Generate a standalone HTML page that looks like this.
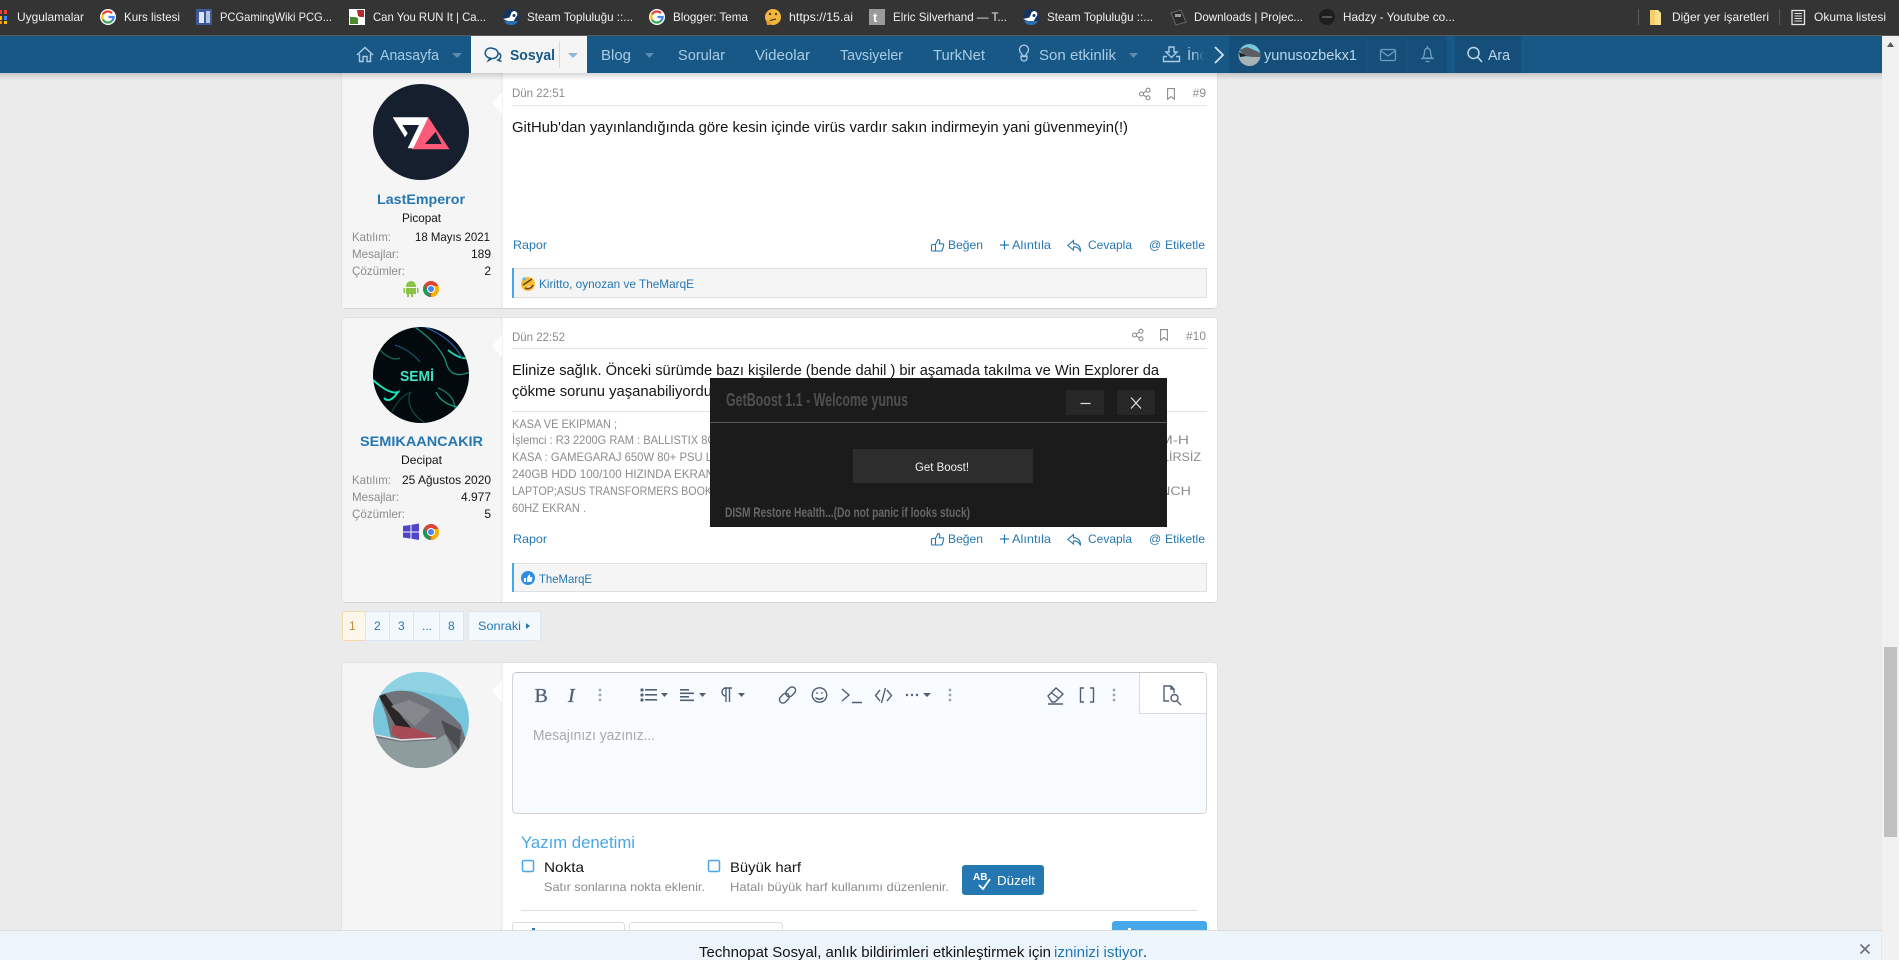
<!DOCTYPE html>
<html lang="tr">
<head>
<meta charset="utf-8">
<title>Technopat Sosyal</title>
<style>
html,body{margin:0;padding:0;background:#ebebeb;overflow:hidden;width:1899px;height:960px}
svg{display:block;font-family:"Liberation Sans",Arial,sans-serif}
.bm{font-size:12px;fill:#f0f0f0}
.nv{font-size:15px;fill:#a9cce6}
.lb{font-size:12px;fill:#8c8c8c}
.vl{font-size:12px;fill:#141414}
.lk{font-size:12px;fill:#2577b1}
.sg{font-size:12px;fill:#8c8c8c}
.ps{font-size:14.5px;fill:#141414}
.ln{fill:none;stroke:#505f75;stroke-width:1.4}
.ac{fill:none;stroke:#2577b1;stroke-width:1.1}
.hd{fill:none;stroke:#8c8c8c;stroke-width:1.1}
</style>
</head>
<body>
<svg width="1899" height="960" viewBox="0 0 1899 960" xmlns="http://www.w3.org/2000/svg">
<defs>
<linearGradient id="shadow" x1="0" y1="0" x2="0" y2="1"><stop offset="0" stop-color="#000" stop-opacity=".16"/><stop offset="1" stop-color="#000" stop-opacity="0"/></linearGradient>
<linearGradient id="fade" x1="0" y1="0" x2="1" y2="0"><stop offset="0" stop-color="#185886" stop-opacity="0"/><stop offset="1" stop-color="#185886"/></linearGradient>
<clipPath id="c1"><circle cx="421" cy="375" r="48"/></clipPath>
<clipPath id="c2"><circle cx="421" cy="720" r="48"/></clipPath>
<clipPath id="c4"><circle cx="1249.5" cy="55" r="11"/></clipPath>
<clipPath id="c3"><rect x="1180" y="40" width="24" height="30"/></clipPath>
<g id="goog"><circle cx="0" cy="0" r="8" fill="#fff"/><path d="M-5 -2.6A5.6 5.6 0 0 1 4 -3.8" fill="none" stroke="#ea4335" stroke-width="2.2"/><path d="M-5 -2.6A5.6 5.6 0 0 0 -5 2.6" fill="none" stroke="#fbbc05" stroke-width="2.2"/><path d="M-5 2.6A5.6 5.6 0 0 0 4 3.8" fill="none" stroke="#34a853" stroke-width="2.2"/><path d="M4 3.8A5.6 5.6 0 0 0 5.6 0H0.5" fill="none" stroke="#4285f4" stroke-width="2.2"/></g>
<g id="steam"><circle r="8" fill="#14355f"/><path d="M-8 2L-2 4.5A3 3 0 0 0 3 3.5L5 0A3.2 3.2 0 1 0 0 -3L-1.5 0.5Z" fill="#fff"/><circle cx="3" cy="-1.5" r="1.5" fill="#14355f"/><path d="M-7 4A8 8 0 0 0 7 4" fill="#2b6fb3"/></g>
<g id="chrome"><circle r="8" fill="#db4437"/><path d="M-6.9 -4L0 8A8 8 0 0 1 -6.9 -4Z" fill="#0f9d58"/><path d="M0 8A8 8 0 0 0 7.5 -3L1 -3Z" fill="#f4b400"/><circle r="4" fill="#fff"/><circle r="3" fill="#4285f4"/></g>
<g id="dolphin">
<rect x="-48" y="-48" width="96" height="96" fill="#78c6dc"/>
<path d="M-48 -48H48V-20L-10 -30L-42 -26L-48 -20Z" fill="#8fd2e4"/>
<path d="M-42 -24Q-25 -32 -8 -28Q20 -18 40 5L48 30V48H-48V15L-30 18L-35 -5Z" fill="#70747a"/>
<path d="M-42 -24L-36 -26L-18 -2L-8 10L-22 12L-32 -6Z" fill="#2a2628"/>
<path d="M-30 -14L-12 -20L10 -10L-6 6Z" fill="#85898d"/>
<path d="M-28 5L-8 8L15 17L-18 20L-30 14Z" fill="#a84a55"/>
<path d="M-48 17L-20 22L15 20L25 14L38 48H-48Z" fill="#8e9c9e"/>
<path d="M-45 15L-20 20L15 18" fill="none" stroke="#e0e0e0" stroke-width="1.5"/>
<path d="M20 0L40 10L38 30L25 15Z" fill="#4b4d50"/>
</g>
<g id="thumb"><path class="ac" d="M2 6.5H4.5V13H1.5Q.5 13 .5 12V7.5Q.5 6.5 2 6.5ZM4.5 6.5L7 1.5Q8.8 1.5 8.8 3.5L8.2 5.8H11.8Q13 6 12.6 7.5L11.4 12Q11 13 10 13H4.5"/></g>
<g id="reply"><path class="ac" d="M6.5 1.5L.8 6.5L6.5 11V8Q11.5 7.5 13.5 12.5Q13.7 5.2 6.5 4.6Z"/></g>
<g id="share"><circle cx="2.5" cy="6" r="2" class="hd"/><circle cx="9" cy="2.2" r="2" class="hd"/><circle cx="9" cy="9.8" r="2" class="hd"/><path class="hd" d="M4.3 5L7.2 3.2M4.3 7L7.2 8.8"/></g>
<g id="mark"><path class="hd" d="M.6 .6H7.4V11.2L4 8.6L.6 11.2Z"/></g>
</defs>

<!-- page -->
<rect width="1899" height="960" fill="#ebebeb"/>

<!-- post 9 -->
<rect x="341.5" y="40.5" width="876" height="268" rx="4" fill="#fff" stroke="#e2e2e2"/>
<path d="M342 44H502V308H345Q342 308 342 305Z" fill="#f5f5f5"/>
<path d="M502 40V308" stroke="#e4e4e4"/>
<path d="M345 308.5H1214" stroke="#d2d2d2"/>
<path d="M502 92L492 103L502 114Z" fill="#fff"/>
<circle cx="421" cy="132" r="48" fill="#151f2e"/>
<path d="M428.300 117.300L449.500 149.300H411.700ZM435.700 131.700L425 144H441.700Z" fill="#fb5a78" fill-rule="evenodd"/>
<path d="M392.700 117.300H428.300L413.300 148.300H407.700L419 125H402.300L407.700 133.300L405 137.300Z" fill="#fff"/>
<text x="377" y="204" font-size="14" font-weight="bold" fill="#2577b1" textLength="88" lengthAdjust="spacingAndGlyphs">LastEmperor</text>
<text x="402" y="222" class="vl" textLength="39" lengthAdjust="spacingAndGlyphs">Picopat</text>
<text x="352" y="241" class="lb" textLength="39" lengthAdjust="spacingAndGlyphs">Katılım:</text>
<text x="415" y="241" class="vl" textLength="75" lengthAdjust="spacingAndGlyphs">18 Mayıs 2021</text>
<text x="352" y="258" class="lb" textLength="47" lengthAdjust="spacingAndGlyphs">Mesajlar:</text>
<text x="491" y="258" class="vl" text-anchor="end">189</text>
<text x="352" y="275" class="lb" textLength="53" lengthAdjust="spacingAndGlyphs">Çözümler:</text>
<text x="491" y="275" class="vl" text-anchor="end">2</text>
<path d="M406 286A5 5 0 0 1 416 286V287H406ZM406 288H416V294H413V297H411V294H409V297H407V294H406ZM403.500 288H405V293H403.500ZM417 288H418.500V293H417Z" fill="#8bc34a"/>
<use href="#chrome" x="431" y="289"/>

<text x="512" y="97" class="lb" textLength="53" lengthAdjust="spacingAndGlyphs">Dün 22:51</text>
<use href="#share" x="1139" y="88"/>
<use href="#mark" x="1167" y="88"/>
<text x="1206" y="97" class="lb" text-anchor="end">#9</text>
<path d="M512 105.500H1207" stroke="#e4e4e4"/>
<text x="512" y="132" class="ps" textLength="616" lengthAdjust="spacingAndGlyphs">GitHub'dan yayınlandığında göre kesin içinde virüs vardır sakın indirmeyin yani güvenmeyin(!)</text>
<text x="513" y="249" class="lk" textLength="34" lengthAdjust="spacingAndGlyphs">Rapor</text>
<use href="#thumb" x="931" y="238"/>
<text x="948" y="249" class="lk" textLength="35" lengthAdjust="spacingAndGlyphs">Beğen</text>
<path d="M1000 245H1009M1004.500 240.500V249.500" stroke="#2577b1" stroke-width="1.200"/>
<text x="1012" y="249" class="lk" textLength="39" lengthAdjust="spacingAndGlyphs">Alıntıla</text>
<use href="#reply" x="1067" y="239"/>
<text x="1088" y="249" class="lk" textLength="44" lengthAdjust="spacingAndGlyphs">Cevapla</text>
<text x="1149" y="249" class="lk" font-size="13">@</text>
<text x="1165" y="249" class="lk" textLength="40" lengthAdjust="spacingAndGlyphs">Etiketle</text>
<rect x="512.500" y="268.500" width="694" height="29" fill="#f5f5f5" stroke="#dfdfdf"/>
<rect x="512" y="268" width="2" height="30" fill="#47a7eb"/>
<circle cx="528" cy="284" r="7" fill="#f7bf2d"/>
<path d="M523 285L532 279" stroke="#5a3a10" stroke-width="1.400" fill="none"/>
<path d="M525 288Q530 290 533 285" stroke="#7a3a10" stroke-width="1.600" fill="#fff"/>
<circle cx="524" cy="279" r="1.600" fill="#58b5f0"/>
<text x="539" y="288" class="lk" textLength="155" lengthAdjust="spacingAndGlyphs">Kiritto, oynozan ve TheMarqE</text>

<!-- post 10 -->
<rect x="341.500" y="317.500" width="876" height="285" rx="4" fill="#fff" stroke="#e2e2e2"/>
<path d="M342 321Q342 318 345 318H502V602H345Q342 602 342 599Z" fill="#f5f5f5"/>
<path d="M502 318V602" stroke="#e4e4e4"/>
<path d="M345 602.500H1214" stroke="#d2d2d2"/>
<path d="M502 335L492 346L502 357Z" fill="#fff"/>
<circle cx="421" cy="375" r="48" fill="#030a0d"/>
<g clip-path="url(#c1)" fill="none" stroke-width="1.300">
<path d="M415 327Q440 345 446 362Q450 380 470 372" stroke="#1b8f7d"/>
<path d="M373 380Q390 395 398 392Q390 404 384 398" stroke="#18e8b8" stroke-width="2"/>
<path d="M438 388Q462 398 452 422" stroke="#157a6a"/>
<path d="M395 345Q410 350 420 362" stroke="#14506a"/>
<path d="M448 350Q460 360 470 358" stroke="#20d0a8" stroke-width="1.800"/>
<path d="M410 392Q405 410 425 423" stroke="#0e4b48"/>
<path d="M425 327Q452 338 462 358" stroke="#2555a8"/>
<path d="M380 350Q392 362 400 358" stroke="#0f6d5a"/>
<path d="M436 392Q442 405 462 408" stroke="#12a58b"/>
<path d="M392 412Q400 395 412 392" stroke="#0d3f3c"/>
</g>
<text x="400" y="381" font-size="15" font-weight="bold" fill="#3fe3c6" textLength="34" lengthAdjust="spacingAndGlyphs">SEMİ</text>
<text x="360" y="446" font-size="14" font-weight="bold" fill="#2577b1" textLength="123" lengthAdjust="spacingAndGlyphs">SEMIKAANCAKIR</text>
<text x="401" y="464" class="vl" textLength="41" lengthAdjust="spacingAndGlyphs">Decipat</text>
<text x="352" y="484" class="lb" textLength="39" lengthAdjust="spacingAndGlyphs">Katılım:</text>
<text x="402" y="484" class="vl" textLength="89" lengthAdjust="spacingAndGlyphs">25 Ağustos 2020</text>
<text x="352" y="501" class="lb" textLength="47" lengthAdjust="spacingAndGlyphs">Mesajlar:</text>
<text x="491" y="501" class="vl" text-anchor="end">4.977</text>
<text x="352" y="518" class="lb" textLength="53" lengthAdjust="spacingAndGlyphs">Çözümler:</text>
<text x="491" y="518" class="vl" text-anchor="end">5</text>
<path d="M403 526L410.500 525V531.500H403ZM411.500 524.800L419 523.500V531.500H411.500ZM403 532.500H410.500V538.500L403 537.500ZM411.500 532.500H419V540L411.500 538.700Z" fill="#5145c7"/>
<use href="#chrome" x="431" y="532"/>

<text x="512" y="341" class="lb" textLength="53" lengthAdjust="spacingAndGlyphs">Dün 22:52</text>
<use href="#share" x="1132" y="329"/>
<use href="#mark" x="1160" y="329"/>
<text x="1206" y="340" class="lb" text-anchor="end">#10</text>
<path d="M512 348.500H1207" stroke="#e4e4e4"/>
<text x="512" y="375" class="ps" textLength="647" lengthAdjust="spacingAndGlyphs">Elinize sağlık. Önceki sürümde bazı kişilerde (bende dahil ) bir aşamada takılma ve Win Explorer da</text>
<text x="512" y="396" class="ps" textLength="200" lengthAdjust="spacingAndGlyphs">çökme sorunu yaşanabiliyordu</text>
<path d="M512 411.500H1207" stroke="#e4e4e4"/>
<text x="512" y="428" class="sg" textLength="105" lengthAdjust="spacingAndGlyphs">KASA VE EKIPMAN ;</text>
<text x="512" y="444" class="sg" textLength="204" lengthAdjust="spacingAndGlyphs">İşlemci : R3 2200G RAM : BALLISTIX 8G</text>
<text x="1160" y="444" class="sg" textLength="29" lengthAdjust="spacingAndGlyphs">M-H</text>
<text x="512" y="461" class="sg" textLength="200" lengthAdjust="spacingAndGlyphs">KASA : GAMEGARAJ 650W 80+ PSU L</text>
<text x="1162" y="461" class="sg" textLength="39" lengthAdjust="spacingAndGlyphs">LİRSİZ</text>
<text x="512" y="478" class="sg" textLength="202" lengthAdjust="spacingAndGlyphs">240GB HDD 100/100 HIZINDA EKRAN</text>
<text x="512" y="495" class="sg" textLength="200" lengthAdjust="spacingAndGlyphs">LAPTOP;ASUS TRANSFORMERS BOOK</text>
<text x="1160" y="495" class="sg" textLength="31" lengthAdjust="spacingAndGlyphs">NCH</text>
<text x="512" y="512" class="sg" textLength="74" lengthAdjust="spacingAndGlyphs">60HZ EKRAN .</text>
<text x="513" y="543" class="lk" textLength="34" lengthAdjust="spacingAndGlyphs">Rapor</text>
<use href="#thumb" x="931" y="532"/>
<text x="948" y="543" class="lk" textLength="35" lengthAdjust="spacingAndGlyphs">Beğen</text>
<path d="M1000 539H1009M1004.500 534.500V543.500" stroke="#2577b1" stroke-width="1.200"/>
<text x="1012" y="543" class="lk" textLength="39" lengthAdjust="spacingAndGlyphs">Alıntıla</text>
<use href="#reply" x="1067" y="533"/>
<text x="1088" y="543" class="lk" textLength="44" lengthAdjust="spacingAndGlyphs">Cevapla</text>
<text x="1149" y="543" class="lk" font-size="13">@</text>
<text x="1165" y="543" class="lk" textLength="40" lengthAdjust="spacingAndGlyphs">Etiketle</text>
<rect x="512.500" y="563.500" width="694" height="28" fill="#f5f5f5" stroke="#dfdfdf"/>
<rect x="512" y="563" width="2" height="29" fill="#47a7eb"/>
<circle cx="528" cy="578" r="7" fill="#2e8ee0"/>
<path d="M524 578H526V582H524ZM527 578L529 574.500Q530.500 574.500 530 577H532.500L531.500 582H527Z" fill="#fff"/>
<text x="539" y="583" class="lk" textLength="53" lengthAdjust="spacingAndGlyphs">TheMarqE</text>

<!-- pagination -->
<rect x="342.500" y="611.500" width="23" height="29" rx="2" fill="#fdf6ea" stroke="#f6d9aa"/>
<text x="349" y="630" font-size="12" fill="#c88a3a">1</text>
<g fill="#f3f8fc" stroke="#dbe6f0">
<rect x="365.500" y="611.500" width="24" height="29"/>
<rect x="389.500" y="611.500" width="24" height="29"/>
<rect x="413.500" y="611.500" width="26" height="29"/>
<rect x="439.500" y="611.500" width="24" height="29" rx="1"/>
<rect x="468.500" y="611.500" width="72" height="29" rx="2"/>
</g>
<text x="374" y="630" class="lk">2</text>
<text x="398" y="630" class="lk">3</text>
<text x="422" y="630" class="lk">...</text>
<text x="448" y="630" class="lk">8</text>
<text x="478" y="630" class="lk" textLength="43" lengthAdjust="spacingAndGlyphs">Sonraki</text>
<path d="M526 623L530 626L526 629Z" fill="#2577b1"/>

<!-- reply card -->
<rect x="341.500" y="662.500" width="876" height="320" rx="4" fill="#fff" stroke="#e2e2e2"/>
<path d="M342 666Q342 663 345 663H502V980H342Z" fill="#f5f5f5"/>
<path d="M502 663V980" stroke="#e4e4e4"/>
<path d="M502 680L492 691L502 702Z" fill="#fff"/>
<g clip-path="url(#c2)"><use href="#dolphin" x="421" y="720"/></g>

<rect x="512.500" y="672.500" width="694" height="141" rx="4" fill="#f8fbff" stroke="#d5d5d5"/>
<path d="M516 672.500H1203" stroke="#c4c4c4" stroke-width="1"/>
<rect x="1140" y="673" width="66" height="40" fill="#fff" rx="3"/>
<path d="M1139.500 673V713.500H1206.500" fill="none" stroke="#dadada"/>
<text x="534.500" y="702" font-family="Liberation Serif" font-size="20" fill="#505f75" stroke="#505f75" stroke-width=".25">B</text>
<text x="568" y="702" font-family="Liberation Serif" font-size="20" font-style="italic" fill="#505f75" stroke="#505f75" stroke-width=".35">I</text>
<g fill="#9aa5b1"><circle cx="600" cy="690" r="1.400"/><circle cx="600" cy="695" r="1.400"/><circle cx="600" cy="700" r="1.400"/>
<circle cx="950" cy="690" r="1.400"/><circle cx="950" cy="695" r="1.400"/><circle cx="950" cy="700" r="1.400"/>
<circle cx="1114" cy="690" r="1.400"/><circle cx="1114" cy="695" r="1.400"/><circle cx="1114" cy="700" r="1.400"/></g>
<g fill="#505f75"><circle cx="642" cy="690" r="1.600"/><circle cx="642" cy="695" r="1.600"/><circle cx="642" cy="700" r="1.600"/>
<rect x="645" y="689" width="12" height="1.600"/><rect x="645" y="694" width="12" height="1.600"/><rect x="645" y="699" width="12" height="1.600"/>
<path d="M661 693H668L664.500 697Z"/>
<rect x="680" y="689" width="9" height="1.600"/><rect x="680" y="692.500" width="14" height="1.600"/><rect x="680" y="696" width="9" height="1.600"/><rect x="680" y="699.500" width="14" height="1.600"/>
<path d="M699 693H706L702.500 697Z"/>
<path d="M738 693H745L741.500 697Z"/>
<circle cx="907" cy="695" r="1.200"/><circle cx="912" cy="695" r="1.200"/><circle cx="917" cy="695" r="1.200"/>
<path d="M923 693H931L927 697Z"/></g>
<path class="ln" d="M724 688H732M729.500 688V702M726 688V702M726 688A4 4 0 0 0 726 696"/>
<g transform="translate(787.500 695) rotate(-45)"><rect class="ln" x="-10" y="-3.500" width="11" height="7" rx="3.500"/><rect class="ln" x="-1" y="-3.500" width="11" height="7" rx="3.500"/></g>
<circle class="ln" cx="819.500" cy="695" r="7.200"/><path class="ln" d="M815.500 697.500Q819.500 701 823.500 697.500"/><circle cx="817" cy="693" r=".9" fill="#505f75"/><circle cx="822" cy="693" r=".9" fill="#505f75"/>
<path class="ln" d="M842 689L849 695L842 701M852 702.500H862"/>
<path class="ln" d="M880 690L875.500 695.500L880 701M887 690L891.500 695.500L887 701M885.500 688L881.500 703"/>
<path class="ln" d="M1048 696L1056 688L1063 694L1055 702H1052ZM1051 692.500L1059 698.500M1048 704H1063"/>
<path class="ln" d="M1084 688H1080.500V702H1084M1090 688H1093.500V702H1090" stroke-width="1.800"/>
<path class="ln" d="M1169 701H1164V686H1171L1174 689V693M1171 686V689H1174"/><circle class="ln" cx="1174.500" cy="698" r="3.500"/><path class="ln" d="M1177 701L1181 705"/>
<text x="533" y="740" font-size="14.500" fill="#aaa" textLength="122" lengthAdjust="spacingAndGlyphs">Mesajınızı yazınız...</text>

<text x="521" y="848" font-size="17" fill="#47a7eb" textLength="114" lengthAdjust="spacingAndGlyphs">Yazım denetimi</text>
<rect x="522.500" y="860.500" width="11" height="11" rx="1.500" fill="#fff" stroke="#47a7eb" stroke-width="1.500"/>
<text x="544" y="872" font-size="14" fill="#141414" textLength="40" lengthAdjust="spacingAndGlyphs">Nokta</text>
<text x="544" y="891" class="lb" textLength="161" lengthAdjust="spacingAndGlyphs">Satır sonlarına nokta eklenir.</text>
<rect x="708.500" y="860.500" width="11" height="11" rx="1.500" fill="#fff" stroke="#47a7eb" stroke-width="1.500"/>
<text x="730" y="872" font-size="14" fill="#141414" textLength="71" lengthAdjust="spacingAndGlyphs">Büyük harf</text>
<text x="730" y="891" class="lb" textLength="219" lengthAdjust="spacingAndGlyphs">Hatalı büyük harf kullanımı düzenlenir.</text>
<rect x="962" y="865" width="82" height="30" rx="3" fill="#2577b1"/>
<text x="973" y="880" font-size="10" font-weight="bold" fill="#fff">AB</text>
<path d="M979 885L983 889L990 879" fill="none" stroke="#fff" stroke-width="1.800"/>
<text x="997" y="885" font-size="13" fill="#fff" textLength="38" lengthAdjust="spacingAndGlyphs">Düzelt</text>
<path d="M521 910.500H1197" stroke="#dfdfdf"/>
<rect x="512.500" y="922.500" width="112" height="40" rx="3" fill="#fff" stroke="#dcdcdc"/>
<rect x="629.500" y="922.500" width="153" height="40" rx="3" fill="#fff" stroke="#dcdcdc"/>
<rect x="1112" y="921" width="95" height="40" rx="3" fill="#47a7eb"/>
<rect x="532" y="928" width="3" height="3" fill="#2577b1"/>
<rect x="1128" y="928" width="3" height="3" fill="#fff"/>

<!-- dialog -->
<rect x="710" y="378" width="457" height="149" fill="#1b1b1b"/>
<text x="726" y="406" font-size="18" font-weight="bold" fill="#4f4f4f" textLength="182" lengthAdjust="spacingAndGlyphs">GetBoost 1.1 - Welcome yunus</text>
<rect x="1066" y="390" width="38" height="25" fill="#272727"/>
<path d="M1080.500 403.500H1090.500" stroke="#e0e0e0" stroke-width="1.200"/>
<rect x="1117" y="390" width="38" height="25" fill="#272727"/>
<path d="M1131 397.500L1141 408.500M1141 397.500L1131 408.500" stroke="#e0e0e0" stroke-width="1.200"/>
<path d="M710 422.500H1167" stroke="#5a5a5a"/>
<rect x="853" y="449" width="180" height="34" fill="#2d2d2d"/>
<text x="915" y="471" font-size="12" fill="#f2f2f2" textLength="54" lengthAdjust="spacingAndGlyphs">Get Boost!</text>
<text x="725" y="517" font-size="14" font-weight="bold" fill="#666" textLength="245" lengthAdjust="spacingAndGlyphs">DISM Restore Health...(Do not panic if looks stuck)</text>

<!-- notice -->
<rect x="0" y="930" width="1882" height="30" fill="#edf5fc"/>
<path d="M0 930.500H1882" stroke="#dcdcdc"/>
<path d="M1882 930V960" stroke="#dcdcdc"/>
<text x="699" y="957" font-size="14.500" fill="#141414" textLength="352" lengthAdjust="spacingAndGlyphs">Technopat Sosyal, anlık bildirimleri etkinleştirmek için</text>
<text x="1054" y="957" font-size="14.500" fill="#2577b1" textLength="89" lengthAdjust="spacingAndGlyphs">izninizi istiyor</text>
<text x="1143" y="957" font-size="14.500" fill="#141414">.</text>
<path d="M1860.500 944.500L1869.500 953.500M1869.500 944.500L1860.500 953.500" stroke="#6a6f7a" stroke-width="1.600"/>

<!-- scrollbar -->
<rect x="1882" y="36" width="17" height="924" fill="#f1f1f1"/>
<rect x="1884" y="647" width="13" height="190" fill="#c1c1c1"/>
<path d="M1887 47L1890.500 42L1894 47Z" fill="#555"/>

<!-- nav shadow -->
<rect x="0" y="73" width="1882" height="7" fill="url(#shadow)"/>

<!-- nav -->
<rect x="0" y="36" width="1882" height="37" fill="#185886"/>
<path d="M357 55L365 47.500L373 55M359.500 54V61.500H363V56.500H367V61.500H370.500V54" fill="none" stroke="#a9cce6" stroke-width="1.400"/>
<text x="380" y="60" class="nv" textLength="59" lengthAdjust="spacingAndGlyphs">Anasayfa</text>
<path d="M452 53H462L457 58Z" fill="#5b8cae"/>
<rect x="471" y="36" width="116" height="37" fill="#f5f5f5"/>
<path d="M493 48.500A5.500 5 0 1 0 490 58L488.500 60.500L492 58.500A5.500 5 0 0 0 493 48.500ZM499 53A4 4 0 0 1 498 60L501.500 61.500" fill="none" stroke="#185886" stroke-width="1.500"/>
<text x="510" y="60" font-size="15" font-weight="bold" fill="#185886" textLength="45" lengthAdjust="spacingAndGlyphs">Sosyal</text>
<path d="M559.500 41V68" stroke="#cfdbe5"/>
<path d="M568 53H578L573 58Z" fill="#8fb8d8"/>
<text x="601" y="60" class="nv" textLength="30" lengthAdjust="spacingAndGlyphs">Blog</text>
<path d="M645 53H654L649.500 58Z" fill="#5b8cae"/>
<text x="678" y="60" class="nv" textLength="47" lengthAdjust="spacingAndGlyphs">Sorular</text>
<text x="755" y="60" class="nv" textLength="55" lengthAdjust="spacingAndGlyphs">Videolar</text>
<text x="840" y="60" class="nv" textLength="63" lengthAdjust="spacingAndGlyphs">Tavsiyeler</text>
<text x="933" y="60" class="nv" textLength="52" lengthAdjust="spacingAndGlyphs">TurkNet</text>
<path d="M1021 53A4.500 4.500 0 1 1 1027 53L1025.500 55V56.500H1022.500V55ZM1021 58A3 3 0 0 0 1027 58V56H1021Z" fill="none" stroke="#a9cce6" stroke-width="1.300"/>
<text x="1039" y="60" class="nv" textLength="77" lengthAdjust="spacingAndGlyphs">Son etkinlik</text>
<path d="M1129 53H1138L1133.500 58Z" fill="#5b8cae"/>
<path d="M1169 47H1174V52H1177L1171.500 57.500L1166 52H1169ZM1163.500 56.500V61.500H1179.500V56.500H1176M1167 56.500H1163.500" fill="none" stroke="#a9cce6" stroke-width="1.400"/>
<g clip-path="url(#c3)"><text x="1187" y="60" class="nv">İndir</text></g>
<rect x="1194" y="40" width="10" height="30" fill="url(#fade)"/>
<path d="M1215 47L1223 55L1215 63" fill="none" stroke="#cfe0ee" stroke-width="1.800"/>
<rect x="1229" y="36" width="218" height="37" fill="#154f79"/>
<rect x="1455" y="36" width="66" height="37" fill="#154f79"/>
<path d="M1367.500 36V73M1407.500 36V73" stroke="#185886" stroke-opacity=".6"/>
<g clip-path="url(#c4)"><rect x="1238" y="44" width="23" height="23" fill="#78c6dc"/><path d="M1239 50L1247 47L1261 53V58L1245 56Z" fill="#5a5e62"/><path d="M1239 52L1247 56L1240 57Z" fill="#1f1c1e"/><path d="M1238 57H1261V67H1238Z" fill="#a6b2b4"/></g>
<text x="1264" y="60" textLength="93" lengthAdjust="spacingAndGlyphs" font-size="15" fill="#bcd6ea">yunusozbekx1</text>
<rect x="1380.500" y="49.500" width="15" height="11" rx="1.500" fill="none" stroke="#6d9ec2" stroke-width="1.300"/>
<path d="M1381 51L1388 56L1395 51" fill="none" stroke="#6d9ec2" stroke-width="1.300"/>
<path d="M1427.500 46V48M1423 58Q1424.500 55 1424.500 52A3 3.800 0 0 1 1430.500 52Q1430.500 55 1432 58ZM1421 58.500H1434M1425.500 61.500H1429.500" fill="none" stroke="#6d9ec2" stroke-width="1.300"/>
<circle cx="1473.500" cy="53" r="5.500" fill="none" stroke="#bcd6ea" stroke-width="1.500"/>
<path d="M1477.500 57L1482 62" stroke="#bcd6ea" stroke-width="1.600"/>
<text x="1488" y="60" textLength="22" lengthAdjust="spacingAndGlyphs" font-size="15" fill="#bcd6ea">Ara</text>

<!-- bookmark bar -->
<rect x="0" y="0" width="1899" height="35" fill="#343434"/>
<rect x="0" y="35" width="1899" height="1" fill="#5a5a5a"/>
<g>
<rect x="0" y="10" width="2" height="4" fill="#ea4335"/><rect x="4" y="10" width="3" height="4" fill="#ea4335"/>
<rect x="0" y="16" width="2" height="4" fill="#fbbc05"/><rect x="4" y="16" width="3" height="4" fill="#4285f4"/>
<rect x="0" y="21" width="2" height="3" fill="#fb8c00"/><rect x="4" y="21" width="3" height="3" fill="#fbbc05"/>
</g>
<text x="17" y="21" class="bm" textLength="67" lengthAdjust="spacingAndGlyphs">Uygulamalar</text>
<use href="#goog" x="108" y="17"/>
<text x="124" y="21" class="bm" textLength="56" lengthAdjust="spacingAndGlyphs">Kurs listesi</text>
<rect x="196" y="9" width="16" height="16" fill="#3c5a9a"/>
<rect x="199" y="12" width="5" height="11" fill="#dfe7f3"/><rect x="206" y="11" width="4" height="12" fill="#b7c6e0"/>
<text x="220" y="21" class="bm" textLength="112" lengthAdjust="spacingAndGlyphs">PCGamingWiki PCG...</text>
<rect x="349" y="9" width="16" height="16" fill="#fff"/>
<path d="M357 10H364V17H360L358 16Z" fill="#b22a2a"/><path d="M350 24V17H355L358 18V24Z" fill="#4a8a2a"/>
<text x="373" y="21" class="bm" textLength="113" lengthAdjust="spacingAndGlyphs">Can You RUN It | Ca...</text>
<use href="#steam" x="511" y="17"/>
<text x="527" y="21" class="bm" textLength="106" lengthAdjust="spacingAndGlyphs">Steam Topluluğu ::...</text>
<use href="#goog" x="657" y="17"/>
<text x="673" y="21" class="bm" textLength="75" lengthAdjust="spacingAndGlyphs">Blogger: Tema</text>
<circle cx="773" cy="17" r="8" fill="#f4b73e"/>
<circle cx="770" cy="14" r="1.200" fill="#5a3a10"/><circle cx="776" cy="14" r="1.200" fill="#5a3a10"/>
<path d="M770 20.500L776 19" stroke="#5a3a10" stroke-width="1.200"/><path d="M766 20L771 22L770 25H767Z" fill="#e59a2b"/>
<text x="789" y="21" class="bm" textLength="64" lengthAdjust="spacingAndGlyphs">https://15.ai</text>
<rect x="869" y="9" width="16" height="16" fill="#9a9a9a"/>
<text x="873" y="22" font-size="13" font-weight="bold" fill="#fff">t</text>
<text x="893" y="21" class="bm" textLength="114" lengthAdjust="spacingAndGlyphs">Elric Silverhand — T...</text>
<use href="#steam" x="1031" y="17"/>
<text x="1047" y="21" class="bm" textLength="106" lengthAdjust="spacingAndGlyphs">Steam Topluluğu ::...</text>
<path d="M1171 13L1181 10L1186 22L1176 25Z" fill="#2a2a2a" stroke="#666"/>
<rect x="1175" y="14" width="6" height="3" fill="#999"/>
<text x="1194" y="21" class="bm" textLength="109" lengthAdjust="spacingAndGlyphs">Downloads | Projec...</text>
<circle cx="1327" cy="17" r="8" fill="#1d1d22"/>
<path d="M1322 17H1332" stroke="#666" stroke-width="1.500"/>
<text x="1343" y="21" class="bm" textLength="112" lengthAdjust="spacingAndGlyphs">Hadzy - Youtube co...</text>
<path d="M1638.500 9V25M1779.500 9V25" stroke="#5a5a5a"/>
<path d="M1650 10H1658L1661 13V25H1650Z" fill="#f6cf6a"/>
<path d="M1655 10H1658L1661 13V25H1655Z" fill="#fbe08c"/>
<text x="1672" y="21" class="bm" textLength="97" lengthAdjust="spacingAndGlyphs">Diğer yer işaretleri</text>
<rect x="1792" y="10.500" width="12.500" height="14" fill="none" stroke="#e8e8e8" stroke-width="1.300"/>
<path d="M1794.500 13.500H1802M1794.500 16H1802M1794.500 18.500H1802M1794.500 21H1802" stroke="#e8e8e8"/>
<text x="1814" y="21" class="bm" textLength="72" lengthAdjust="spacingAndGlyphs">Okuma listesi</text>
</svg>
</body>
</html>
